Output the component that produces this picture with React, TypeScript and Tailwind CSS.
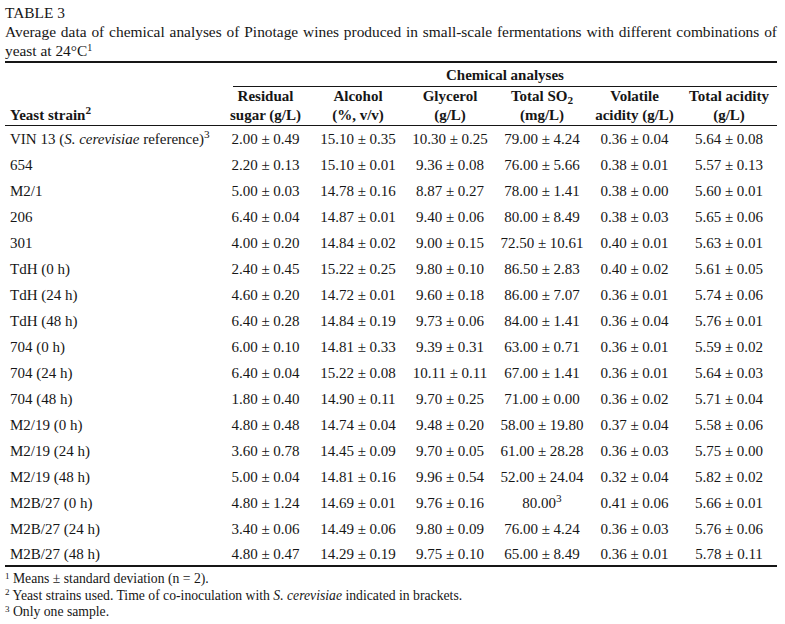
import React from 'react';

type Row = { strain: React.ReactNode; values: React.ReactNode[] };

const rows: Row[] = [
  {
    strain: (
      <>
        VIN 13 (<i>S. cerevisiae</i> reference)<sup>3</sup>
      </>
    ),
    values: ['2.00 ± 0.49', '15.10 ± 0.35', '10.30 ± 0.25', '79.00 ± 4.24', '0.36 ± 0.04', '5.64 ± 0.08'],
  },
  { strain: '654', values: ['2.20 ± 0.13', '15.10 ± 0.01', '9.36 ± 0.08', '76.00 ± 5.66', '0.38 ± 0.01', '5.57 ± 0.13'] },
  { strain: 'M2/1', values: ['5.00 ± 0.03', '14.78 ± 0.16', '8.87 ± 0.27', '78.00 ± 1.41', '0.38 ± 0.00', '5.60 ± 0.01'] },
  { strain: '206', values: ['6.40 ± 0.04', '14.87 ± 0.01', '9.40 ± 0.06', '80.00 ± 8.49', '0.38 ± 0.03', '5.65 ± 0.06'] },
  { strain: '301', values: ['4.00 ± 0.20', '14.84 ± 0.02', '9.00 ± 0.15', '72.50 ± 10.61', '0.40 ± 0.01', '5.63 ± 0.01'] },
  { strain: 'TdH (0 h)', values: ['2.40 ± 0.45', '15.22 ± 0.25', '9.80 ± 0.10', '86.50 ± 2.83', '0.40 ± 0.02', '5.61 ± 0.05'] },
  { strain: 'TdH (24 h)', values: ['4.60 ± 0.20', '14.72 ± 0.01', '9.60 ± 0.18', '86.00 ± 7.07', '0.36 ± 0.01', '5.74 ± 0.06'] },
  { strain: 'TdH (48 h)', values: ['6.40 ± 0.28', '14.84 ± 0.19', '9.73 ± 0.06', '84.00 ± 1.41', '0.36 ± 0.04', '5.76 ± 0.01'] },
  { strain: '704 (0 h)', values: ['6.00 ± 0.10', '14.81 ± 0.33', '9.39 ± 0.31', '63.00 ± 0.71', '0.36 ± 0.01', '5.59 ± 0.02'] },
  { strain: '704 (24 h)', values: ['6.40 ± 0.04', '15.22 ± 0.08', '10.11 ± 0.11', '67.00 ± 1.41', '0.36 ± 0.01', '5.64 ± 0.03'] },
  { strain: '704 (48 h)', values: ['1.80 ± 0.40', '14.90 ± 0.11', '9.70 ± 0.25', '71.00 ± 0.00', '0.36 ± 0.02', '5.71 ± 0.04'] },
  { strain: 'M2/19 (0 h)', values: ['4.80 ± 0.48', '14.74 ± 0.04', '9.48 ± 0.20', '58.00 ± 19.80', '0.37 ± 0.04', '5.58 ± 0.06'] },
  { strain: 'M2/19 (24 h)', values: ['3.60 ± 0.78', '14.45 ± 0.09', '9.70 ± 0.05', '61.00 ± 28.28', '0.36 ± 0.03', '5.75 ± 0.00'] },
  { strain: 'M2/19 (48 h)', values: ['5.00 ± 0.04', '14.81 ± 0.16', '9.96 ± 0.54', '52.00 ± 24.04', '0.32 ± 0.04', '5.82 ± 0.02'] },
  {
    strain: 'M2B/27 (0 h)',
    values: [
      '4.80 ± 1.24',
      '14.69 ± 0.01',
      '9.76 ± 0.16',
      <>
        80.00<sup>3</sup>
      </>,
      '0.41 ± 0.06',
      '5.66 ± 0.01',
    ],
  },
  { strain: 'M2B/27 (24 h)', values: ['3.40 ± 0.06', '14.49 ± 0.06', '9.80 ± 0.09', '76.00 ± 4.24', '0.36 ± 0.03', '5.76 ± 0.06'] },
  { strain: 'M2B/27 (48 h)', values: ['4.80 ± 0.47', '14.29 ± 0.19', '9.75 ± 0.10', '65.00 ± 8.49', '0.36 ± 0.01', '5.78 ± 0.11'] },
];

const headers: [React.ReactNode, React.ReactNode][] = [
  ['Residual', 'sugar (g/L)'],
  ['Alcohol', '(%, v/v)'],
  ['Glycerol', '(g/L)'],
  [
    <>
      Total SO<sub>2</sub>
    </>,
    '(mg/L)',
  ],
  ['Volatile', 'acidity (g/L)'],
  ['Total acidity', '(g/L)'],
];

const gridCols = 'grid grid-cols-[214px_93px_92px_92px_92px_93px_96px]';

export default function App() {
  return (
    <div className="min-h-screen bg-white font-['Liberation_Serif','Times_New_Roman',serif] text-[#161616]">
      <div className="w-[777px] pl-[5px]">
        {/* caption */}
        <div className="pt-[3px] text-[15.4px] leading-[19px]">
          <div>TABLE 3</div>
          <div className="text-justify whitespace-nowrap [text-align-last:justify]">
            Average data of chemical analyses of Pinotage wines produced in small-scale fermentations with different
            combinations of
          </div>
          <div>
            yeast at 24°C<sup className="text-[10px]">1</sup>
          </div>
        </div>

        {/* table */}
        <div className="mt-[1px] border-t-2 border-[#161616] text-[15px]">
          <div className={gridCols}>
            <div />
            <div className="col-span-6 ml-[14px] h-[24px] border-b border-[#161616] text-center font-bold leading-[24px]">
              Chemical analyses
            </div>
          </div>
          <div className={`${gridCols} border-b border-[#161616] font-bold leading-[19px]`}>
            <div className="flex items-end pl-[5px]">
              <span>
                Yeast strain<sup>2</sup>
              </span>
            </div>
            {headers.map((h, i) => (
              <div key={i} className="text-center whitespace-nowrap">
                <div>{h[0]}</div>
                <div>{h[1]}</div>
              </div>
            ))}
          </div>
          <div className="border-b-2 border-[#161616]">
            {rows.map((r, i) => (
              <div
                key={i}
                className={`${gridCols} ${i === rows.length - 1 ? 'h-[23px] leading-[24px]' : 'h-[26px] leading-[26px]'}`}
              >
                <div className="pl-[5px] whitespace-nowrap">{r.strain}</div>
                {r.values.map((v, j) => (
                  <div key={j} className="text-center whitespace-nowrap">
                    {v}
                  </div>
                ))}
              </div>
            ))}
          </div>
        </div>

        {/* footnotes */}
        <div className="pt-[4px] text-[13.7px] leading-[16.5px]">
          <div>
            <sup className="text-[9px]">1</sup> Means ± standard deviation (n = 2).
          </div>
          <div>
            <sup className="text-[9px]">2</sup> Yeast strains used. Time of co-inoculation with <i>S. cerevisiae</i>{' '}
            indicated in brackets.
          </div>
          <div>
            <sup className="text-[9px]">3</sup> Only one sample.
          </div>
        </div>
      </div>
    </div>
  );
}
